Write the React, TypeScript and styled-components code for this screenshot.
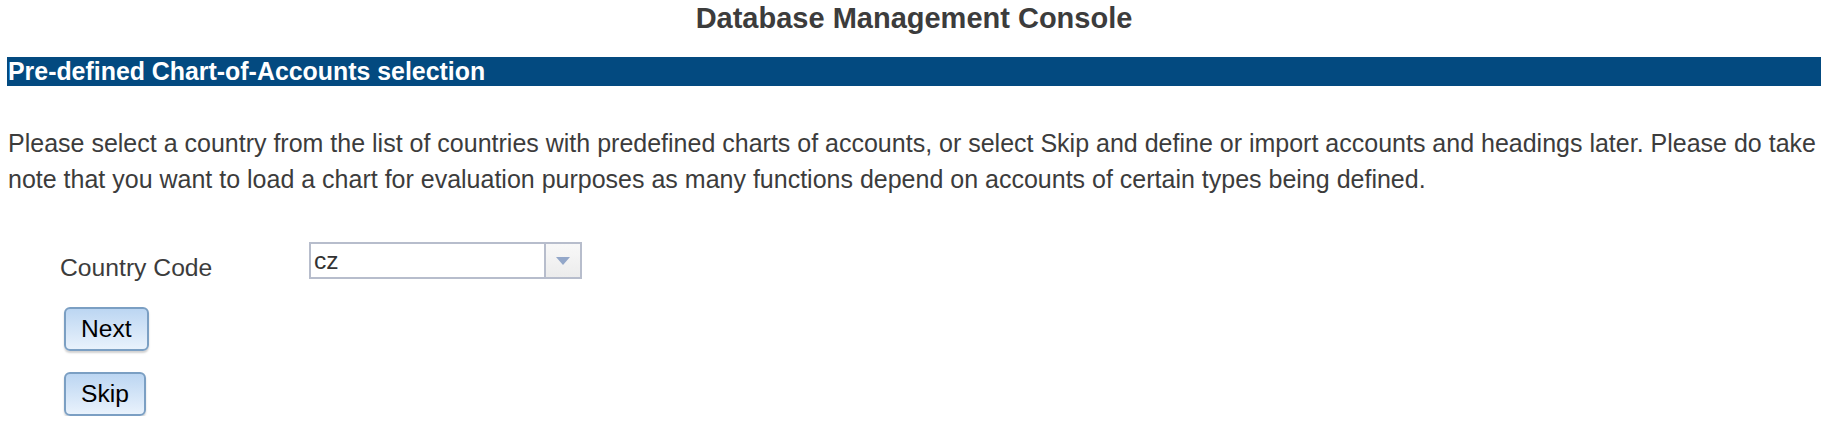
import React from "react";
import styled, { createGlobalStyle } from "styled-components";

const GlobalStyle = createGlobalStyle`
  html, body {
    margin: 0;
    padding: 0;
    background: #ffffff;
  }
  body {
    font-family: "Liberation Sans", Arial, Helvetica, sans-serif;
    color: #3a3a3a;
  }
`;

const Page = styled.div`
  padding: 1px 10px 0 7px;
`;

const Title = styled.h1`
  margin: 0;
  font-size: 29px;
  line-height: 34px;
  font-weight: bold;
  text-align: center;
  color: #3c3c3c;
`;

const Banner = styled.h2`
  margin: 22px 0 0;
  height: 29px;
  padding: 0 0 0 1px;
  background: #034a80;
  color: #ffffff;
  font-size: 24.9px;
  line-height: 29px;
  font-weight: bold;
`;

const Intro = styled.p`
  margin: 39px -10px 0 1px;
  font-size: 25px;
  line-height: 36px;
  color: #3c3c3c;
`;

const FormRow = styled.div`
  display: flex;
  align-items: flex-end;
  margin: 45px 0 0 53px;
`;

const Label = styled.label`
  width: 249px;
  font-size: 24.7px;
  line-height: 28px;
  color: #3c3c3c;
  margin-bottom: -3px;
`;

const Select = styled.div`
  display: flex;
  width: 273px;
  height: 37px;
  box-sizing: border-box;
  border: 2px solid #b7bdcc;
  background: #ffffff;
`;

const SelectValue = styled.div`
  flex: 1;
  padding: 4px 0 0 3px;
  font-size: 24.6px;
  line-height: 26px;
  color: #333333;
  border-right: 2px solid #b7bdcc;
`;

const SelectToggle = styled.div`
  width: 34px;
  display: flex;
  align-items: center;
  justify-content: center;
  background: linear-gradient(#f8f8f8, #ececec);
`;

const Actions = styled.div`
  display: flex;
  flex-direction: column;
  align-items: flex-start;
  gap: 21px;
  margin: 28px 0 0 57px;
`;

const Button = styled.button`
  height: 44px;
  padding: 0 15px;
  box-sizing: border-box;
  border: 2px solid #7b9fc3;
  border-radius: 6px;
  background: linear-gradient(#bcd6f2, #e9f2fc);
  box-shadow: 0 2px 2px rgba(0, 0, 0, 0.18);
  font-family: "Liberation Sans", Arial, sans-serif;
  font-size: 24.6px;
  color: #000000;
  cursor: pointer;
`;

export default function App() {
  return (
    <>
      <GlobalStyle />
      <Page>
        <Title>Database Management Console</Title>
        <Banner>Pre-defined Chart-of-Accounts selection</Banner>
        <Intro>
          Please select a country from the list of countries with predefined
          charts of accounts, or select Skip and define or import accounts and
          headings later. Please do take note that you want to load a chart for
          evaluation purposes as many functions depend on accounts of certain
          types being defined.
        </Intro>
        <FormRow>
          <Label>Country Code</Label>
          <Select>
            <SelectValue>cz</SelectValue>
            <SelectToggle>
              <svg width="14" height="8" viewBox="0 0 14 8">
                <path d="M0 0h14L7 8z" fill="#93a7c9" />
              </svg>
            </SelectToggle>
          </Select>
        </FormRow>
        <Actions>
          <Button>Next</Button>
          <Button>Skip</Button>
        </Actions>
      </Page>
    </>
  );
}
